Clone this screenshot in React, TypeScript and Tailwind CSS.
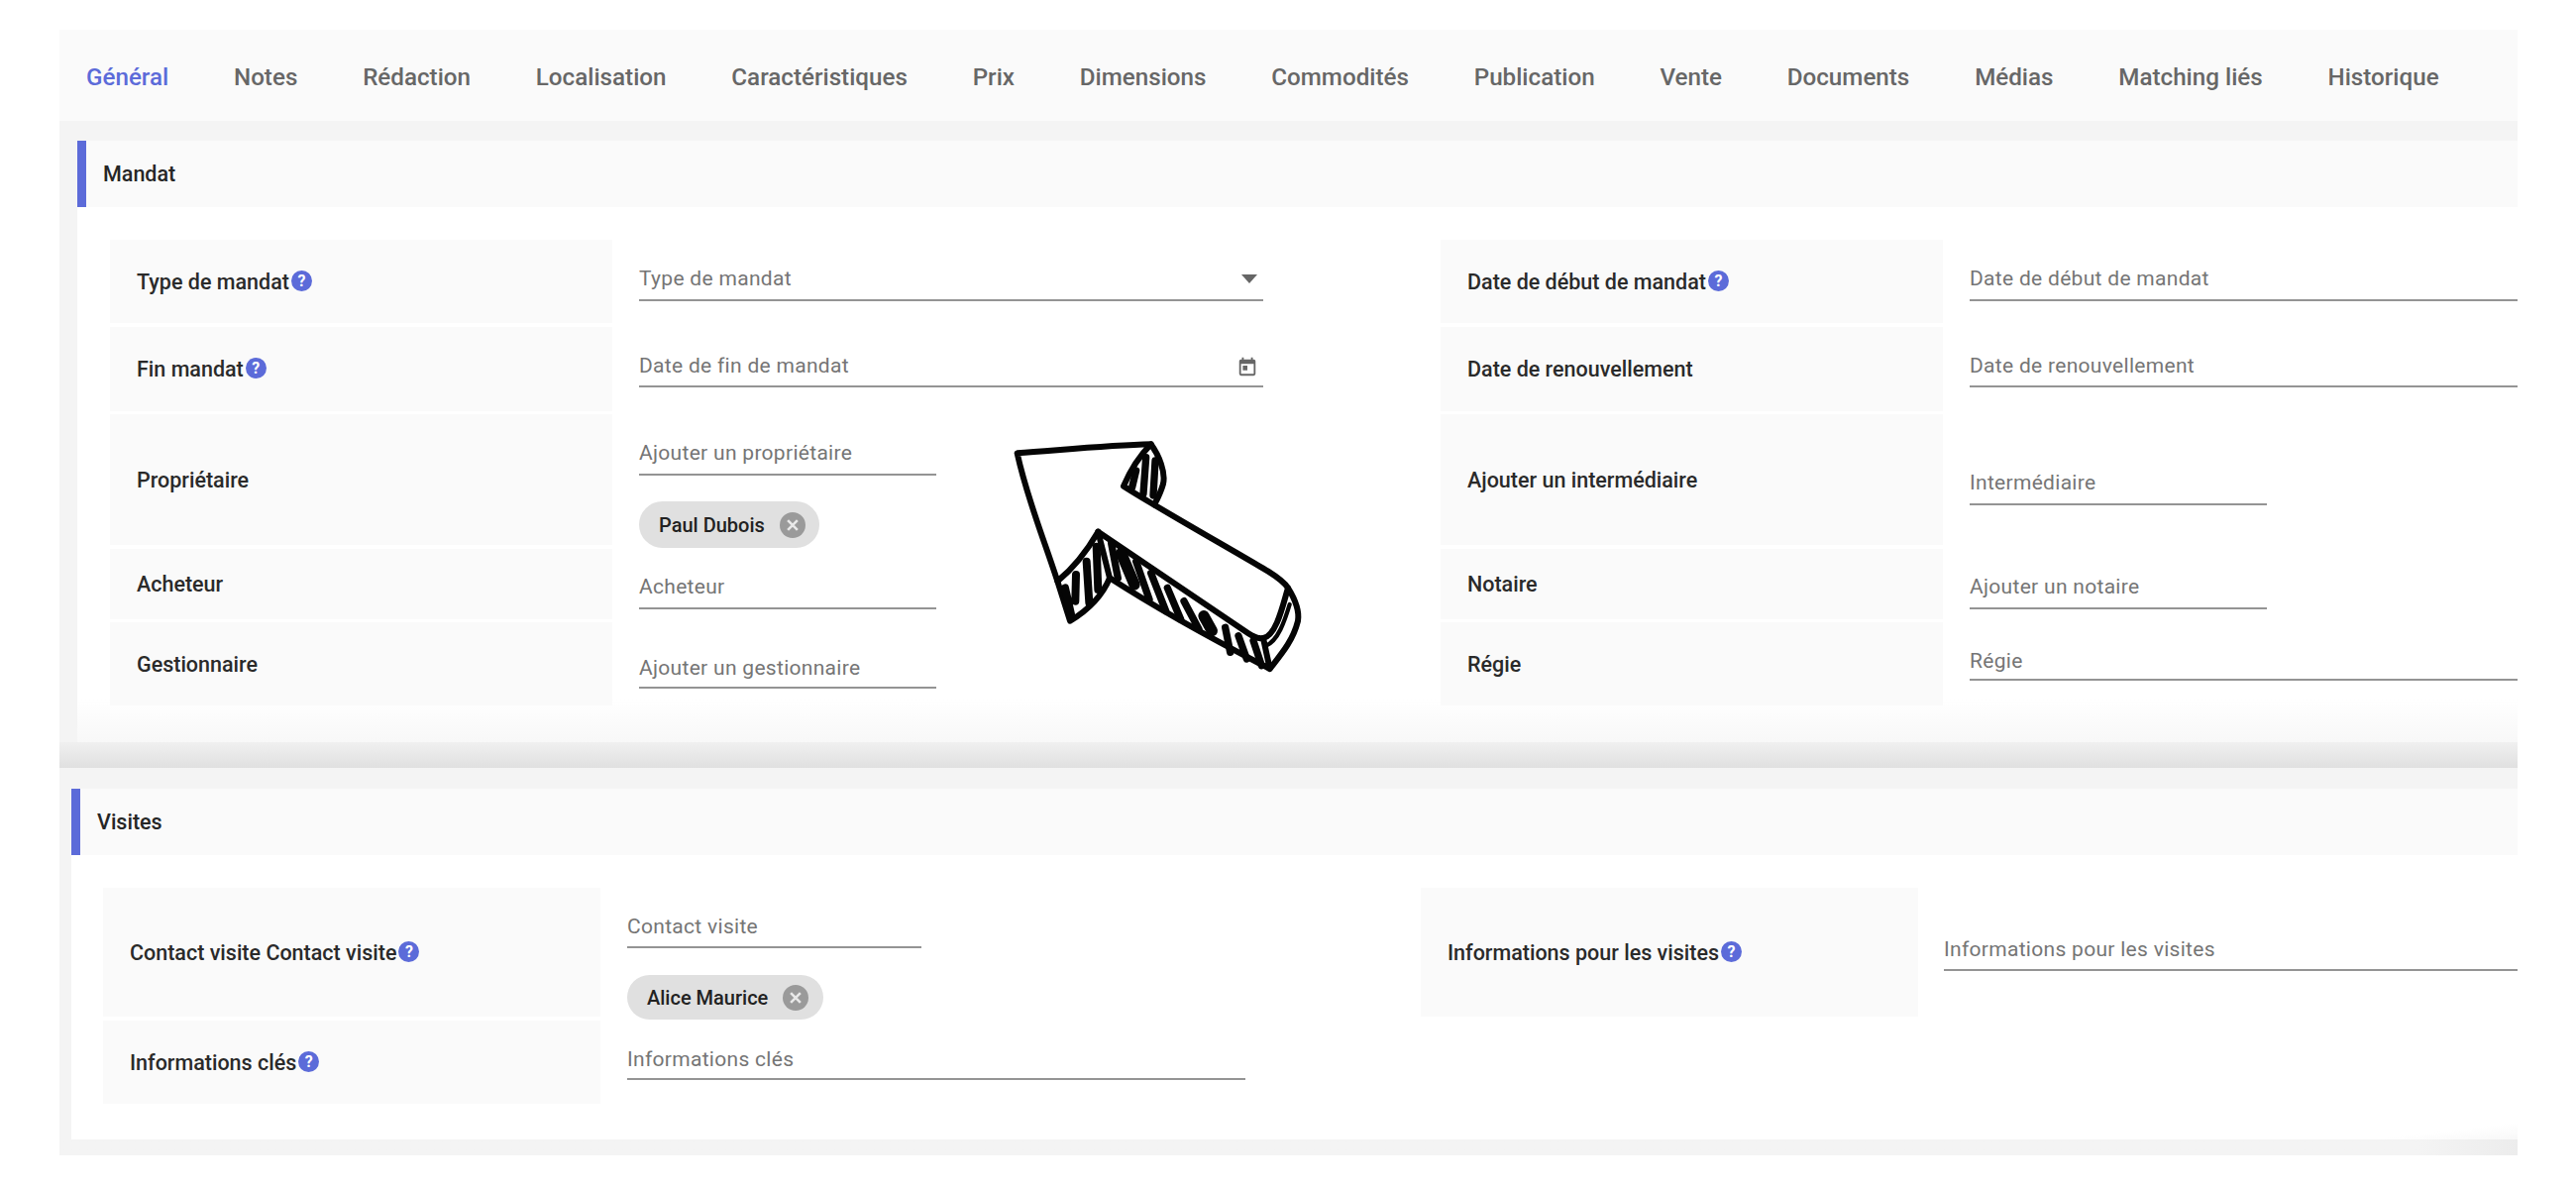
import { ReactNode } from "react";

const tabs = [
  "Général",
  "Notes",
  "Rédaction",
  "Localisation",
  "Caractéristiques",
  "Prix",
  "Dimensions",
  "Commodités",
  "Publication",
  "Vente",
  "Documents",
  "Médias",
  "Matching liés",
  "Historique",
];

const HelpIcon = () => (
  <span className="-mt-[3px] ml-[2px] flex h-[21px] w-[21px] shrink-0 items-center justify-center rounded-full bg-[#5c6bd9] text-[16px] font-bold leading-none text-white">
    ?
  </span>
);

const Label = ({ children, help }: { children: ReactNode; help?: boolean }) => (
  <div className="flex items-center bg-[#fafafa] pl-[27px] pt-[2px] text-[21.5px] font-medium text-[#2a2a2a]">
    {children}
    {help && <HelpIcon />}
  </div>
);

const Field = ({ text, className = "", children }: { text: string; className?: string; children?: ReactNode }) => (
  <div className={`flex items-start justify-between border-b-2 border-[#949494] text-[21px] leading-[26px] tracking-[0.3px] text-[#757575] ${className}`}>
    {text}
    {children}
  </div>
);

const Chip = ({ name, className = "" }: { name: string; className?: string }) => (
  <div className={`flex w-fit items-center rounded-full bg-[#e0e0e0] pl-[20px] pr-[14.5px] text-[20px] font-medium text-[#222222] ${className}`}>
    {name}
    <svg viewBox="0 0 24 24" className="ml-[15px] h-[26px] w-[26px]">
      <circle cx="12" cy="12" r="12" fill="#9a9a9a" />
      <path d="M7.5 7.5l9 9M16.5 7.5l-9 9" stroke="#e8e8e8" strokeWidth="2.4" />
    </svg>
  </div>
);

const SectionHeader = ({ title }: { title: string }) => (
  <div className="flex h-[67px] items-center border-l-[9px] border-[#5c6bd9] bg-[#fafafa] pl-[17px] pt-[2px] text-[21.5px] font-medium text-[#262626]">
    {title}
  </div>
);

const Arrow = () => (
  <svg
    viewBox="0 0 1200 840"
    className="absolute left-[980px] top-[420px] h-[280px] w-[400px]"
    fill="none"
    stroke="#050505"
    strokeWidth="18"
    strokeLinecap="round"
    strokeLinejoin="round"
  >
    <path d="M140 112C280 102 420 88 545 85C505 125 480 170 462 212C560 275 800 410 900 470C935 492 950 505 960 520C945 570 925 665 885 672C870 675 855 668 840 658L385 350C350 410 310 460 262 500C220 370 170 250 140 112Z" fill="#ffffff" />
    <path d="M545 85C570 120 590 170 582 205C575 230 565 250 555 268" />
    <path d="M262 500L300 620C350 590 395 550 420 490L385 350" />
    <path d="M420 490C560 580 740 680 905 765L885 672" />
    <path d="M960 520C985 560 995 590 990 620C975 680 940 720 905 765" />
    <path d="M965 570C950 620 930 680 893 695" strokeWidth="13" />
    {/* hatching on the head */}
    <g strokeWidth="22">
      <path d="M500 165L488 215M530 125L522 235M558 135L552 240" />
    </g>
    <g strokeWidth="24">
      <path d="M285 520L303 600M318 480L316 560M350 440L358 565M380 395L385 525" />
    </g>
    {/* hatching along the shaft */}
    <g strokeWidth="22">
      <path d="M425 385L445 490M500 440L540 555M545 475L590 590M595 520L635 615M645 560L690 645M770 640L785 715M810 665L835 735M855 680L880 755" />
    </g>
    <g strokeWidth="34">
      <path d="M455 415L495 510M705 605L730 650" />
    </g>
  </svg>
);

export default function App() {
  return (
    <div className="relative h-[1200px] w-[2600px] bg-white pl-[60px] pr-[59px] pt-[30px] font-['Roboto',sans-serif]">
      <div className="h-[1135px] bg-[#f4f4f4]">
        <nav className="flex h-[92px] items-center gap-[65.8px] bg-[#fafafa] pl-[27px] pt-[4px] text-[24.2px] font-medium text-[#676767]">
          {tabs.map((tab, i) => (
            <span key={tab} className={i === 0 ? "text-[#5c6bd9]" : ""}>
              {tab}
            </span>
          ))}
        </nav>

        <section className="ml-[18px] mt-[20px]">
          <SectionHeader title="Mandat" />
          <div className="h-[540px] bg-gradient-to-b from-white from-[92%] to-[#f8f8f8] pl-[33px] pt-[33px]">
            <div className="grid grid-cols-[507px_836px_507px_580px] grid-rows-[84px_85px_132px_71px_84px] gap-y-[3.5px]">
              <Label help>Type de mandat</Label>
              <div className="pl-[27px] pt-[26px]">
                <Field text="Type de mandat" className="h-[36px] w-[630px]">
                  <span className="mr-[6px] mt-[9px] h-0 w-0 border-x-[8px] border-t-[9px] border-x-transparent border-t-[#666666]" />
                </Field>
              </div>
              <Label help>Date de début de mandat</Label>
              <div className="pl-[27px] pt-[26px]">
                <Field text="Date de début de mandat" className="h-[36px]" />
              </div>

              <Label help>Fin mandat</Label>
              <div className="pl-[27px] pt-[25px]">
                <Field text="Date de fin de mandat" className="h-[36px] w-[630px] pt-[1px]">
                  <svg viewBox="0 0 24 24" className="mr-[5px] mt-[3px] h-[22px] w-[22px]" fill="#666666">
                    <path d="M19 4h-1V2h-2v2H8V2H6v2H5a2 2 0 0 0-2 2v14a2 2 0 0 0 2 2h14a2 2 0 0 0 2-2V6a2 2 0 0 0-2-2zm0 16H5V9h14v11zM7 11h5v5H7z" />
                  </svg>
                </Field>
              </div>
              <Label>Date de renouvellement</Label>
              <div className="pl-[27px] pt-[25px]">
                <Field text="Date de renouvellement" className="h-[36px] pt-[1px]" />
              </div>

              <Label>Propriétaire</Label>
              <div className="pl-[27px] pt-[26px]">
                <Field text="Ajouter un propriétaire" className="h-[36px] w-[300px]" />
                <Chip name="Paul Dubois" className="mt-[26px] h-[47px]" />
              </div>
              <Label>Ajouter un intermédiaire</Label>
              <div className="pl-[27px] pt-[55px]">
                <Field text="Intermédiaire" className="h-[37px] w-[300px] pt-[1px]" />
              </div>

              <Label>Acheteur</Label>
              <div className="pl-[27px] pt-[25px]">
                <Field text="Acheteur" className="h-[36px] w-[300px]" />
              </div>
              <Label>Notaire</Label>
              <div className="pl-[27px] pt-[25px]">
                <Field text="Ajouter un notaire" className="h-[36px] w-[300px]" />
              </div>

              <Label>Gestionnaire</Label>
              <div className="pl-[27px] pt-[33px]">
                <Field text="Ajouter un gestionnaire" className="h-[34px] w-[300px]" />
              </div>
              <Label>Régie</Label>
              <div className="pl-[27px] pt-[25px]">
                <Field text="Régie" className="h-[34px] pt-[1px]" />
              </div>
            </div>
          </div>
        </section>

        <div className="h-[26px] bg-gradient-to-b from-[#f0f0f0] to-[#e0e0e0]" />

        <section className="ml-[12px] mt-[21px]">
          <SectionHeader title="Visites" />
          <div className="h-[287px] bg-gradient-to-br from-white from-[97%] to-[#f8f8f8] pl-[32px] pt-[33px]">
            <div className="grid grid-cols-[502px_828px_502px_605px] grid-rows-[130px_84px] gap-y-[4px]">
              <Label help>Contact visite Contact visite</Label>
              <div className="pl-[27px] pt-[25px]">
                <Field text="Contact visite" className="h-[36px] w-[297px] pt-[1px]" />
                <Chip name="Alice Maurice" className="mt-[27px] h-[45px]" />
              </div>
              <Label help>Informations pour les visites</Label>
              <div className="pl-[26px] pt-[49px]">
                <Field text="Informations pour les visites" className="h-[35px]" />
              </div>

              <Label help>Informations clés</Label>
              <div className="pl-[27px] pt-[26px]">
                <Field text="Informations clés" className="h-[34px] w-[624px]" />
              </div>
            </div>
          </div>
        </section>
        <div className="h-[16px] bg-gradient-to-r from-[#f4f4f4] from-[96%] to-[#ececec]" />
      </div>
      <Arrow />
    </div>
  );
}
